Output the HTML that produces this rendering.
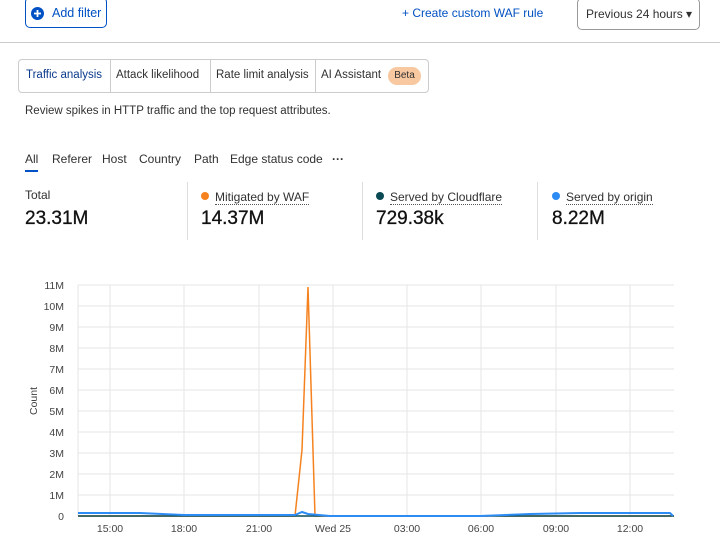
<!DOCTYPE html><html><head><style>
body{margin:0;width:720px;height:540px;overflow:hidden;background:#fff;font-family:"Liberation Sans",sans-serif;color:#313131;position:relative}
.a{position:absolute;white-space:nowrap}
</style></head><body>
<div class="a" style="left:25px;top:-3px;width:80px;height:29px;border:1px solid #0051c3;border-radius:5px"></div>
<svg class="a" style="left:31px;top:7px" width="13" height="13"><circle cx="6.5" cy="6.5" r="6.5" fill="#0051c3"/><path d="M6.5 3v7M3 6.5h7" stroke="#fff" stroke-width="1.8"/></svg>
<div class="a" style="left:52px;top:6px;font-size:12.5px;color:#0051c3">Add filter</div>
<div class="a" style="left:402px;top:6px;font-size:12px;color:#0051c3">+ Create custom WAF rule</div>
<div class="a" style="left:577px;top:-2px;width:121px;height:30px;border:1px solid #999;border-radius:5px"></div>
<div class="a" style="left:586px;top:7px;font-size:12px;color:#313131">Previous 24 hours ▾</div>
<div class="a" style="left:0;top:42px;width:720px;height:1px;background:#ccc"></div>
<div class="a" style="left:18px;top:59px;width:409px;height:32px;border:1px solid #ccc;border-radius:4px"></div>
<div class="a" style="left:110px;top:60px;width:1px;height:32px;background:#ccc"></div>
<div class="a" style="left:210px;top:60px;width:1px;height:32px;background:#ccc"></div>
<div class="a" style="left:315px;top:60px;width:1px;height:32px;background:#ccc"></div>
<div class="a" style="left:26px;top:69px;font-size:11.5px;color:#0a3a8c">Traffic analysis</div>
<div class="a" style="left:116px;top:69px;font-size:11.5px">Attack likelihood</div>
<div class="a" style="left:216px;top:69px;font-size:11.5px">Rate limit analysis</div>
<div class="a" style="left:321px;top:69px;font-size:11.5px">AI Assistant</div>
<div class="a" style="left:388px;top:67px;width:33px;height:18px;border-radius:9px;background:#f8c8a0;font-size:10px;line-height:18px;text-align:center">Beta</div>
<div class="a" style="left:25px;top:105px;font-size:11.5px">Review spikes in HTTP traffic and the top request attributes.</div>
<div class="a" style="left:25px;top:152px;font-size:12px"><span style="position:absolute;left:0">All</span><span style="position:absolute;left:27px">Referer</span><span style="position:absolute;left:77px">Host</span><span style="position:absolute;left:114px">Country</span><span style="position:absolute;left:169px">Path</span><span style="position:absolute;left:205px">Edge status code</span><b style="position:absolute;left:307px">···</b></div>
<div class="a" style="left:25px;top:170px;width:13px;height:2px;background:#0051c3"></div>
<div class="a" style="left:187px;top:182px;width:1px;height:58px;background:#ddd"></div>
<div class="a" style="left:362px;top:182px;width:1px;height:58px;background:#ddd"></div>
<div class="a" style="left:537px;top:182px;width:1px;height:58px;background:#ddd"></div>
<div class="a" style="left:25px;top:188px;font-size:12px">Total</div>
<div class="a" style="left:201px;top:192px;width:8px;height:8px;border-radius:4px;background:#f6821f"></div>
<div class="a" style="left:215px;top:190px;font-size:12px;border-bottom:1px dotted #555">Mitigated by WAF</div>
<div class="a" style="left:376px;top:192px;width:8px;height:8px;border-radius:4px;background:#0a4a54"></div>
<div class="a" style="left:390px;top:190px;font-size:12px;border-bottom:1px dotted #555">Served by Cloudflare</div>
<div class="a" style="left:552px;top:192px;width:8px;height:8px;border-radius:4px;background:#2c8cf4"></div>
<div class="a" style="left:566px;top:190px;font-size:12px;border-bottom:1px dotted #555">Served by origin</div>
<div class="a" style="left:25px;top:208px;font-size:19px;color:#111;-webkit-text-stroke:0.3px #111">23.31M</div>
<div class="a" style="left:201px;top:208px;font-size:19px;color:#111;-webkit-text-stroke:0.3px #111">14.37M</div>
<div class="a" style="left:376px;top:208px;font-size:19px;color:#111;-webkit-text-stroke:0.3px #111">729.38k</div>
<div class="a" style="left:552px;top:208px;font-size:19px;color:#111;-webkit-text-stroke:0.3px #111">8.22M</div>
<svg class="a" style="left:0;top:270px" width="720" height="270" font-family="Liberation Sans" font-size="10.5" fill="#444">
<g stroke="#e6e6e6">
<line x1="78" x2="674" y1="15" y2="15"/><line x1="78" x2="674" y1="36" y2="36"/><line x1="78" x2="674" y1="57" y2="57"/><line x1="78" x2="674" y1="78" y2="78"/><line x1="78" x2="674" y1="99" y2="99"/><line x1="78" x2="674" y1="120" y2="120"/><line x1="78" x2="674" y1="141" y2="141"/><line x1="78" x2="674" y1="162" y2="162"/><line x1="78" x2="674" y1="183" y2="183"/><line x1="78" x2="674" y1="204" y2="204"/><line x1="78" x2="674" y1="225" y2="225"/>
<line x1="78" x2="78" y1="15" y2="246"/><line x1="110" x2="110" y1="15" y2="246"/><line x1="184" x2="184" y1="15" y2="246"/><line x1="259" x2="259" y1="15" y2="246"/><line x1="333" x2="333" y1="15" y2="246"/><line x1="407" x2="407" y1="15" y2="246"/><line x1="481" x2="481" y1="15" y2="246"/><line x1="556" x2="556" y1="15" y2="246"/><line x1="630" x2="630" y1="15" y2="246"/>
</g>
<g text-anchor="end"><text x="64" y="19">11M</text><text x="64" y="40">10M</text><text x="64" y="61">9M</text><text x="64" y="82">8M</text><text x="64" y="103">7M</text><text x="64" y="124">6M</text><text x="64" y="145">5M</text><text x="64" y="166">4M</text><text x="64" y="187">3M</text><text x="64" y="208">2M</text><text x="64" y="229">1M</text><text x="64" y="250">0</text></g>
<g text-anchor="middle"><text x="110" y="262">15:00</text><text x="184" y="262">18:00</text><text x="259" y="262">21:00</text><text x="333" y="262">Wed 25</text><text x="407" y="262">03:00</text><text x="481" y="262">06:00</text><text x="556" y="262">09:00</text><text x="630" y="262">12:00</text></g>
<text transform="translate(37 131) rotate(-90)" text-anchor="middle">Count</text>
<polyline fill="none" stroke="#f6821f" stroke-width="1.5" points="78,246 295,246 302,180 308,17 315,246 674,246"/>
<line x1="78" x2="674" y1="246" y2="246" stroke="#0a4a54" stroke-width="1.5"/>
<polyline fill="none" stroke="#2c8cf4" stroke-width="2" points="78,243 140,243 184,245 295,245 302,242 308,244 330,246 480,246 530,244 580,243 670,243 673,246"/>
</svg>
</body></html>
